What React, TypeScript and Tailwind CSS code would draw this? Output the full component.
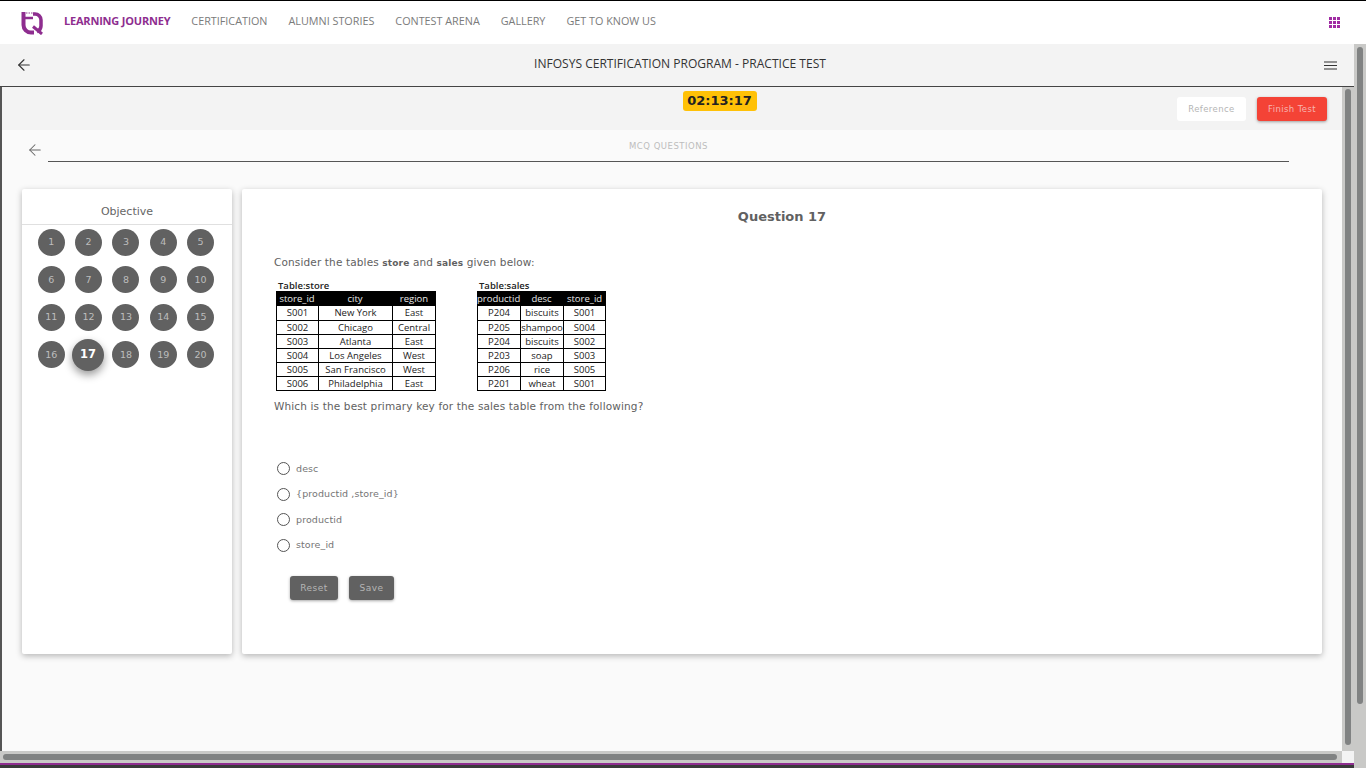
import { ArrowLeft } from "lucide-react";

const storeRows = [
  ["S001", "New York", "East"],
  ["S002", "Chicago", "Central"],
  ["S003", "Atlanta", "East"],
  ["S004", "Los Angeles", "West"],
  ["S005", "San Francisco", "West"],
  ["S006", "Philadelphia", "East"],
];
const salesRows = [
  ["P204", "biscuits", "S001"],
  ["P205", "shampoo", "S004"],
  ["P204", "biscuits", "S002"],
  ["P203", "soap", "S003"],
  ["P206", "rice", "S005"],
  ["P201", "wheat", "S001"],
];
const navItems = ["CERTIFICATION", "ALUMNI STORIES", "CONTEST ARENA", "GALLERY", "GET TO KNOW US"];
const options = ["desc", "{productid ,store_id}", "productid", "store_id"];

function Logo() {
  return (
    <svg width="24" height="24" viewBox="0 0 24 24" fill="none" className="shrink-0">
      <path d="M3.5 1V14a7.5 7.5 0 0 0 7.5 7.5h3" stroke="#8e2d8f" strokeWidth="4" />
      <path d="M2 7h11" stroke="#8e2d8f" strokeWidth="2.5" />
      <path d="M13 3h2a6 6 0 0 1 6 6v6a6 6 0 0 1-4 5.5" stroke="#8e2d8f" strokeWidth="3.5" />
      <path d="M13 15.5l9 7.5" stroke="#8e2d8f" strokeWidth="3" />
      <path d="M6 2h7" stroke="#b77fb8" strokeWidth="1.5" strokeDasharray="1.5 1" />
    </svg>
  );
}

function GridIcon() {
  return (
    <svg width="11" height="11" viewBox="0 0 11 11" fill="#a02ca3">
      {[0, 4, 8].map((y) =>
        [0, 4, 8].map((x) => <rect key={`${x}-${y}`} x={x} y={y} width="3" height="3" />)
      )}
    </svg>
  );
}

function MenuIcon() {
  return (
    <svg width="13" height="9" viewBox="0 0 13 9" stroke="#333" strokeWidth="1.2" className="shrink-0">
      <path d="M0 1h13M0 4.5h13M0 8h13" />
    </svg>
  );
}

function DataTable({
  caption,
  head,
  rows,
  headCols,
  rowCols,
}: {
  caption: string;
  head: string[];
  rows: string[][];
  headCols: string;
  rowCols: string;
}) {
  return (
    <div className="flex flex-col font-['Open_Sans',sans-serif] text-[9.5px] text-[#222]">
      <div className="h-[13px] pl-[2px] font-semibold leading-[15px]">{caption}</div>
      <div className={`grid ${headCols} h-[15px] items-center bg-black text-center leading-[15px] text-[#e8e8e8]`}>
        {head.map((h) => (
          <div key={h}>{h}</div>
        ))}
      </div>
      <div className="border-x border-b border-black">
        {rows.map((r, i) => (
          <div key={i} className={`grid ${rowCols} h-[14px] border-t border-black text-center leading-[13px] first:border-t-0`}>
            {r.map((c, j) => (
              <div key={j} className={j ? "border-l border-black" : ""}>
                {c}
              </div>
            ))}
          </div>
        ))}
      </div>
    </div>
  );
}

function Question({ n }: { n: number }) {
  if (n === 17) {
    return (
      <div className="-ml-[1px] flex h-[32px] w-[32px] items-center justify-center rounded-full bg-[#616161] text-[11.5px] font-bold text-white shadow-[0_4px_8px_rgba(0,0,0,0.4)]">
        {n}
      </div>
    );
  }
  return (
    <div className="flex h-[27px] w-[27px] items-center justify-center rounded-full bg-[#616161] text-[9.5px] text-[#bdbdbd]">
      {n}
    </div>
  );
}

export default function App() {
  return (
    <div className="flex h-[768px] w-[1366px] flex-col overflow-hidden border-t border-black bg-white font-['DejaVu_Sans',sans-serif]">
      <nav className="flex h-[43px] shrink-0 items-center bg-white pl-[20px] pr-[26px]">
        <Logo />
        <div className="mb-[2px] ml-[20px] flex flex-1 items-center gap-[21px] font-['Open_Sans',sans-serif] text-[10.8px] text-[#7b7b7b]">
          <span className="text-[11px] font-bold tracking-[-0.2px] text-[#8e2d8f]">LEARNING JOURNEY</span>
          {navItems.map((t) => (
            <span key={t}>{t}</span>
          ))}
        </div>
        <GridIcon />
      </nav>

      <div className="flex min-h-0 flex-1">
        <div className="flex min-w-0 flex-1 flex-col">
          <header className="flex h-[43px] shrink-0 items-center border-b border-[#444] bg-[#f3f3f3] pl-[15px] pr-[17px]">
            <ArrowLeft size={18} strokeWidth={1.5} className="shrink-0 text-[#333]" />
            <h1 className="mb-[2px] flex-1 pl-[3px] text-center font-['Open_Sans',sans-serif] text-[12.05px] font-normal text-[#333]">
              INFOSYS CERTIFICATION PROGRAM - PRACTICE TEST
            </h1>
            <MenuIcon />
          </header>

          <div className="flex min-h-0 flex-1">
            <main className="flex min-w-0 flex-1 flex-col border-l-2 border-[#555] bg-[#fafafa]">
              <div className="flex h-[43px] shrink-0 items-start bg-[#f3f3f3] pr-[15px]">
                <div className="flex flex-1 justify-center pl-[260px] pt-[4px]">
                  <span className="flex h-[20px] w-[74px] items-center justify-center rounded-[3px] bg-[#ffc107] text-[13px] font-bold text-[#222]">
                    02:13:17
                  </span>
                </div>
                <div className="flex gap-[11px] pt-[10px] text-[8.5px] tracking-[0.4px]">
                  <span className="flex h-[24px] w-[69px] items-center justify-center rounded-[3px] bg-white text-[#b5b5b5]">
                    Reference
                  </span>
                  <span className="flex h-[24px] w-[70px] items-center justify-center rounded-[3px] bg-[#f44336] text-[#f7b5b0] shadow-[0_1px_3px_rgba(0,0,0,0.35)]">
                    Finish Test
                  </span>
                </div>
              </div>

              <div className="flex shrink-0 pl-[24px] pr-[53px] pt-[9px]">
                <ArrowLeft size={18} strokeWidth={1.4} className="mt-[2px] shrink-0 text-[#666]" />
                <div className="ml-[4px] flex h-[23px] flex-1 items-start justify-center border-b border-[#555] pt-[1px] text-[8.5px] tracking-[0.5px] text-[#bdbdbd]">
                  MCQ QUESTIONS
                </div>
              </div>

              <div className="mt-[27px] flex h-[465px] shrink-0 gap-[10px] pl-[20px] pr-[20px]">
                <aside className="flex w-[210px] shrink-0 flex-col rounded-[2px] bg-white shadow-[0_2px_6px_rgba(0,0,0,0.28)]">
                  <div className="h-[36px] border-b border-[#e0e0e0] pt-[15px] text-center text-[11px] leading-[15px] text-[#666]">
                    Objective
                  </div>
                  <div className="grid grid-cols-5 justify-items-center gap-y-[10.4px] pl-[10.7px] pr-[12.8px] pt-[4px]">
                    {Array.from({ length: 20 }, (_, i) => i + 1).map((n) => (
                      <div key={n} className="flex h-[27px] items-center justify-center">
                        <Question n={n} />
                      </div>
                    ))}
                  </div>
                </aside>

                <section className="flex-1 rounded-[2px] bg-white pl-[32px] shadow-[0_2px_6px_rgba(0,0,0,0.28)]">
                  <h2 className="-ml-[32px] pt-[19.5px] text-center text-[13px] font-bold leading-[16px] text-[#616161]">
                    Question 17
                  </h2>
                  <p className="mt-[30.5px] text-[10.5px] leading-[14px] tracking-[0.14px] text-[#616161]">
                    Consider the tables <b className="text-[9px]">store</b> and <b className="text-[9px]">sales</b> given below:
                  </p>
                  <div className="ml-[2px] mt-[8px] flex gap-[41px]">
                    <div className="w-[160px]">
                      <DataTable
                        caption="Table:store"
                        head={["store_id", "city", "region"]}
                        rows={storeRows}
                        headCols="grid-cols-[42px_74px_44px]"
                        rowCols="grid-cols-[41px_74px_43px]"
                      />
                    </div>
                    <div className="w-[129px]">
                      <DataTable
                        caption="Table:sales"
                        head={["productid", "desc", "store_id"]}
                        rows={salesRows}
                        headCols="grid-cols-[43px_43px_43px]"
                        rowCols="grid-cols-[42px_43px_42px]"
                      />
                    </div>
                  </div>
                  <p className="mt-[8px] text-[10.5px] leading-[14px] tracking-[0.14px] text-[#616161]">
                    Which is the best primary key for the sales table from the following?
                  </p>
                  <div className="ml-[3px] mt-[49px] flex flex-col gap-[12px]">
                    {options.map((o) => (
                      <label key={o} className="flex h-[13.5px] items-center gap-[6px] text-[9.5px] tracking-[0.1px] text-[#757575]">
                        <span className="h-[13px] w-[13px] shrink-0 rounded-full border border-[#555]" />
                        {o}
                      </label>
                    ))}
                  </div>
                  <div className="ml-[16px] mt-[24px] flex gap-[11px] text-[9px] tracking-[0.5px] text-[#b5b5b5]">
                    <span className="flex h-[24px] w-[48px] items-center justify-center rounded-[3px] bg-[#616161] pt-[1px] shadow-[0_1px_3px_rgba(0,0,0,0.35)]">
                      Reset
                    </span>
                    <span className="flex h-[24px] w-[45px] items-center justify-center rounded-[3px] bg-[#616161] pt-[1px] shadow-[0_1px_3px_rgba(0,0,0,0.35)]">
                      Save
                    </span>
                  </div>
                </section>
              </div>
            </main>

            <div className="w-[12px] shrink-0 bg-[#c9c9c7] px-[3px] pt-[2px]">
              <div className="h-[656px] rounded-full bg-[#808282]" />
            </div>
          </div>

          <div className="flex h-[12px] shrink-0">
            <div className="flex-1 bg-[#c9c9c7] px-[3px] py-[3px]">
              <div className="h-[6px] w-[1334px] rounded-full bg-[#808282]" />
            </div>
            <div className="w-[12px] bg-[#f3f3f3]" />
          </div>
          <div className="h-[2px] shrink-0 bg-[#8e2d8f]" />
          <div className="h-[3px] shrink-0 bg-[#3a3a3a]" />
        </div>

        <div className="w-[12px] shrink-0 bg-[#c9c9c7] px-[3px] pt-[3px]">
          <div className="h-[657px] rounded-full bg-[#808282]" />
        </div>
      </div>
    </div>
  );
}
